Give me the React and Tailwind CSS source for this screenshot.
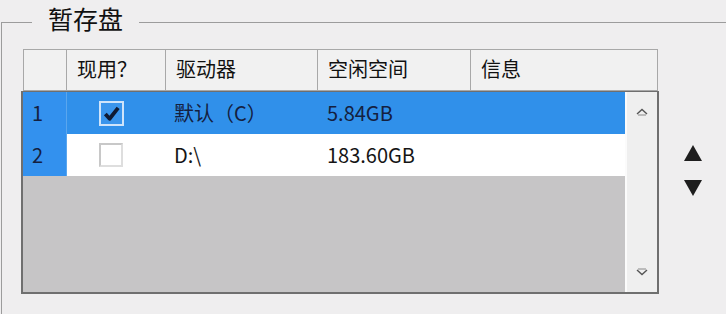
const cjk = { fontFamily: '"Noto Sans CJK SC", "Noto Sans", sans-serif' };

function Check({ on }) {
  if (on) {
    return (
      <div className="flex h-[25px] w-[25px] items-center justify-center border-2 border-[#cfe4fa] bg-[#3a95ec]">
        <svg viewBox="0 0 20 20" className="h-[19px] w-[19px]">
          <path d="M3.5 10.5 L8 15.5 L17 4" fill="none" stroke="#0f1a33" strokeWidth="4" strokeLinejoin="round" />
        </svg>
      </div>
    );
  }
  return <div className="h-[24px] w-[24px] border-2 border-[#c8c8c8] border-b-[#dedede] border-r-[#dedede] bg-white" />;
}

const head = ["", "现用？", "驱动器", "空闲空间", "信息"];
const rows = [
  { n: "1", on: true, drive: "默认（C）", free: "5.84GB", sel: true },
  { n: "2", on: false, drive: "D:\\", free: "183.60GB", sel: false },
];

export default function App() {
  return (
    <div className="h-[314px] w-[726px] overflow-hidden bg-[#efeeef] text-[#111]" style={cjk}>
      <div className="flex items-start">
        <div className="mt-[22px] ml-[1px] h-[18px] w-[31px] border-t border-l border-[#9c9c9c]" />
        <div className="px-4 pt-[1px] text-[25px] leading-[34px] text-[#111]">暂存盘</div>
        <div className="mt-[22px] flex-1 border-t border-[#9c9c9c]" />
      </div>
      <div className="ml-[1px] flex h-[274px] border-l border-[#9c9c9c]">
        <div className="ml-[19px] mt-[9px] flex flex-col">
          <div className="ml-[2px] flex h-[42px] w-[635px] border-t border-l border-[#a8a8a8] bg-[#f1f1f1] text-[20px]">
            {head.map((h, i) => (
              <div
                key={i}
                className={
                  "flex items-center border-r border-b border-[#a8a8a8] px-[10px] pb-[3px] " +
                  (i === 0 ? "w-[43px]" : i === 1 ? "w-[99px]" : i === 2 ? "w-[152px]" : i === 3 ? "w-[153px]" : "flex-1")
                }
              >
                {h}
              </div>
            ))}
          </div>
          <div className="flex h-[203px] w-[638px] border-2 border-t border-[#6f6f6f] bg-[#c6c5c6]">
            <div className="flex flex-1 flex-col">
              {rows.map((r) => (
                <div
                  key={r.n}
                  className={"flex h-[42px] text-[20px] " + (r.sel ? "bg-[#3090ea] text-[#14203f]" : "bg-white text-[#151515]")}
                >
                  <div className="flex w-[44px] items-center border-r border-[#5aa6ee] bg-[#3391ee] pl-[9px] text-[#14203f]">
                    {r.n}
                  </div>
                  <div className="flex w-[99px] items-center pl-[32px]">
                    <Check on={r.on} />
                  </div>
                  <div className="flex w-[152px] items-center pl-[8px]">{r.drive}</div>
                  <div className="flex items-center pl-[9px]">{r.free}</div>
                </div>
              ))}
            </div>
            <div className="flex w-[32px] flex-col items-center justify-between border-l-2 border-[#fbfbfb] bg-[#efefef] py-[16px]">
              <svg viewBox="0 0 12 8" className="h-[8px] w-[12px]">
                <path d="M1 6 L6 1.5 L11 6" fill="none" stroke="#555" strokeWidth="1.4" />
                <path d="M2 7 L10 7" stroke="#888" strokeWidth="1" />
              </svg>
              <svg viewBox="0 0 12 8" className="h-[8px] w-[12px]">
                <path d="M1 2 L6 6.5 L11 2" fill="none" stroke="#555" strokeWidth="1.4" />
                <path d="M2 1 L10 1" stroke="#888" strokeWidth="1" />
              </svg>
            </div>
          </div>
        </div>
        <div className="flex flex-1 flex-col items-center gap-[19px] pt-[105px]">
          <svg viewBox="0 0 18 16" className="h-[16px] w-[18px]">
            <path d="M9 0 L18 16 L0 16 Z" fill="#1e1e1e" />
          </svg>
          <svg viewBox="0 0 18 16" className="h-[16px] w-[18px]">
            <path d="M0 0 L18 0 L9 16 Z" fill="#1e1e1e" />
          </svg>
        </div>
      </div>
    </div>
  );
}
